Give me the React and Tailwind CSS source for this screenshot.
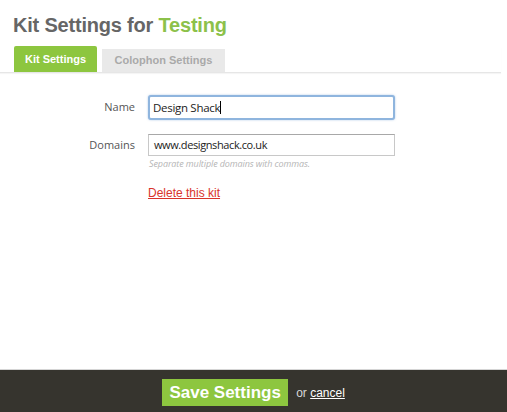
export default function App() {
  return (
    <div className="w-[507px] h-[412px] bg-white flex flex-col overflow-hidden" style={{ fontFamily: '"Liberation Sans", Arial, sans-serif' }}>
      <div className="pl-[13px] pt-[12px] h-[47px]">
        <h1 className="text-[20px] leading-[26px] font-bold text-[#666666] tracking-[-0.2px]">
          Kit Settings for <span className="text-[#8cc14a]">Testing</span>
        </h1>
      </div>
      <div className="flex items-end gap-[5px] pl-[14px] h-[26px] border-b border-[#e6e6e6] shadow-[0_1px_1px_rgba(0,0,0,0.04)] mr-[6px]">
        <div className="h-[26px] w-[83px] bg-[#8dc63f] rounded-t-[2px] flex items-center justify-center text-white text-[11px] font-bold">
          Kit Settings
        </div>
        <div className="h-[23px] w-[123px] bg-[#e9e9e9] flex items-center justify-center text-[#a9a9a9] text-[11px] font-bold">
          Colophon Settings
        </div>
      </div>
      <div className="grid grid-cols-[135px_247px] gap-x-[13px] mt-[22px]" style={{ fontFamily: '"Open Sans", "Noto Sans", sans-serif' }}>
        <div className="h-[25px] flex items-center justify-end text-[11px] text-[#555]">Name</div>
        <div className="h-[25px] border-2 border-[#8fb5de] rounded-[3px] bg-white flex items-center px-[3px] text-[11.5px] tracking-[-0.3px] text-[#222] shadow-[0_0_2px_rgba(80,140,210,0.5)]">
          Design Shack<span className="w-px h-[13px] bg-black"></span>
        </div>
        <div className="h-[22px] flex items-center justify-end text-[11px] text-[#555] mt-[14px]">Domains</div>
        <div className="h-[22px] mt-[14px] border border-[#c8c8c8] border-t-[#a8a8a8] bg-white flex items-center px-[5px] text-[11px] tracking-[-0.4px] text-[#222]">
          www.designshack.co.uk
        </div>
        <div></div>
        <div className="text-[9px] italic text-[#b5b5b5] mt-[2px] leading-[12px] pl-[1px] tracking-[-0.1px]">Separate multiple domains with commas.</div>
        <div></div>
        <div className="mt-[9px]">
          <a className="text-[12px] text-[#d9342b] underline" style={{ fontFamily: '"Liberation Sans", Arial, sans-serif' }}>Delete this kit</a>
        </div>
      </div>
      <div className="flex-1"></div>
      <div className="h-[43px] bg-[#36342e] border-t border-[#d5d5d5] flex items-center justify-center gap-[8px]">
        <div className="h-[27px] w-[126px] bg-[#8dc63f] flex items-center justify-center text-white text-[17px] font-bold mt-[3px]">
          Save Settings
        </div>
        <div className="text-[12px] text-[#d8d8d8] mt-[3px]">
          or <span className="underline text-white">cancel</span>
        </div>
      </div>
    </div>
  );
}
